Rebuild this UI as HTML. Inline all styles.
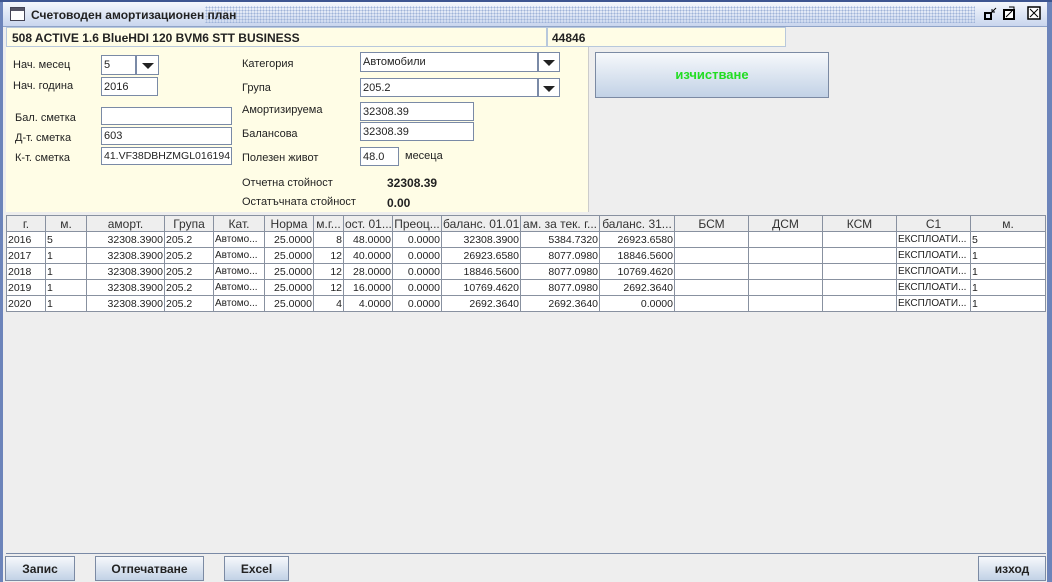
<!DOCTYPE html>
<html><head><meta charset="utf-8"><style>
*{box-sizing:border-box;margin:0;padding:0}
body{width:1052px;height:582px;overflow:hidden;background:#6c84ba;font-family:"Liberation Sans",sans-serif;font-size:11px;color:#222;position:relative}
.a{position:absolute}
.win{left:3px;top:0;width:1044px;height:582px;background:#eeeeee}
.title{left:3px;top:2px;width:1044px;height:25px;background:linear-gradient(#f4f7fc,#c9d6ee);border-bottom:1px solid #8fa3c8}
.dots{left:205px;top:6px;width:770px;height:17px;background-image:radial-gradient(#9fb3d8 0.8px,transparent 1px);background-size:3px 3px}
.tf{background:#fff;border:1px solid #7a8aa6;height:18px;padding:0 2px;font-size:11px;display:flex;align-items:center;white-space:nowrap;overflow:hidden}
.lbl{font-size:11px}
.btn{background:linear-gradient(#f6f8fb,#c2d2e6);border:1px solid #7b8aa3;text-align:center;font-weight:bold;font-size:12px;color:#222}
table{border-collapse:collapse;table-layout:fixed;position:absolute;left:6px;top:215px;width:1039px}
td,th{border:1px solid #8891a0;height:16px;font-size:10.5px;white-space:nowrap;overflow:hidden;padding:0 1px;font-weight:normal}
th{background:#eeeeee;color:#333;font-size:12px;height:16px}
td{background:#fff}
.r{text-align:right}
</style></head><body>
<div class="a win"></div>
<div class="a" style="left:0;top:0;width:1052px;height:2px;background:#3d5590"></div>
<div class="a title"></div>
<div class="a dots"></div>
<div class="a" style="left:10px;top:7px;width:15px;height:14px;border:1px solid #445;background:#fff"><div style="height:3px;background:#556"></div></div>
<div class="a" style="left:31px;top:8px;font-size:12px;font-weight:bold;color:#222">Счетоводен амортизационен план</div>
<svg class="a" style="left:982px;top:5px" width="64" height="18"><rect x="3" y="8" width="6" height="6" fill="none" stroke="#000" stroke-width="2"/><path d="M14 3 L10 7 M10 4 V7 H13" stroke="#000" fill="none"/><rect x="22" y="5" width="10" height="9" fill="#fff" stroke="#000" stroke-width="2"/><path d="M24 12 L30 6 M27 2 H32 V7" stroke="#000" fill="none"/><rect x="46" y="2" width="12" height="12" fill="#fff" stroke="#000" stroke-width="1.5"/><path d="M48 4 L56 12 M56 4 L48 12" stroke="#000"/></svg>
<div class="a" style="left:6px;top:27px;width:541px;height:20px;background:#fffde6;border:1px solid #b8c8dc;padding:3px 5px;font-weight:bold;font-size:12px">508 ACTIVE 1.6 BlueHDI 120 BVM6 STT BUSINESS</div>
<div class="a" style="left:547px;top:27px;width:239px;height:20px;background:#fffde6;border:1px solid #b8c8dc;padding:3px 4px;font-weight:bold;font-size:12px">44846</div>
<div class="a" style="left:6px;top:47px;width:583px;height:165px;background:#fffde6;border-right:1px solid #ccc"></div>
<div class="a lbl" style="left:13px;top:59px">Нач. месец</div>
<div class="a tf" style="left:101px;top:55px;width:35px;height:20px">5</div>
<div class="a" style="left:136px;top:55px;width:23px;height:20px;background:#fff;border:1px solid #7a8aa6"><div style="margin:7px auto 0;width:0;border-left:6px solid transparent;border-right:6px solid transparent;border-top:6px solid #222"></div></div>
<div class="a lbl" style="left:13px;top:80px">Нач. година</div>
<div class="a tf" style="left:101px;top:77px;width:57px;height:19px">2016</div>
<div class="a lbl" style="left:15px;top:112px">Бал. сметка</div>
<div class="a tf" style="left:101px;top:107px;width:131px">&nbsp;</div>
<div class="a lbl" style="left:15px;top:132px">Д-т. сметка</div>
<div class="a tf" style="left:101px;top:127px;width:131px">603</div>
<div class="a lbl" style="left:15px;top:152px">К-т. сметка</div>
<div class="a tf" style="left:101px;top:147px;width:131px;font-size:10.5px">41.VF38DBHZMGL016194</div>
<div class="a lbl" style="left:242px;top:58px">Категория</div>
<div class="a tf" style="left:360px;top:52px;width:178px;height:20px">Автомобили</div>
<div class="a" style="left:538px;top:52px;width:22px;height:20px;background:#fff;border:1px solid #7a8aa6"><div style="margin:7px auto 0;width:0;border-left:6px solid transparent;border-right:6px solid transparent;border-top:6px solid #222"></div></div>
<div class="a lbl" style="left:242px;top:82px">Група</div>
<div class="a tf" style="left:360px;top:78px;width:178px;height:19px">205.2</div>
<div class="a" style="left:538px;top:78px;width:22px;height:19px;background:#fff;border:1px solid #7a8aa6"><div style="margin:7px auto 0;width:0;border-left:6px solid transparent;border-right:6px solid transparent;border-top:6px solid #222"></div></div>
<div class="a lbl" style="left:242px;top:104px">Амортизируема</div>
<div class="a tf" style="left:360px;top:102px;width:114px;height:19px">32308.39</div>
<div class="a lbl" style="left:242px;top:128px">Балансова</div>
<div class="a tf" style="left:360px;top:122px;width:114px;height:19px">32308.39</div>
<div class="a lbl" style="left:242px;top:152px">Полезен живот</div>
<div class="a tf" style="left:360px;top:147px;width:39px;height:19px">48.0</div>
<div class="a lbl" style="left:405px;top:150px">месеца</div>
<div class="a lbl" style="left:242px;top:177px">Отчетна стойност</div>
<div class="a" style="left:387px;top:176px;font-weight:bold;font-size:12px">32308.39</div>
<div class="a lbl" style="left:242px;top:196px">Остатъчната стойност</div>
<div class="a" style="left:387px;top:196px;font-weight:bold;font-size:12px">0.00</div>
<div class="a btn" style="left:595px;top:52px;width:234px;height:46px;line-height:44px;color:#22dd22;font-size:13px">изчистване</div>
<table>
<colgroup><col style="width:39px"><col style="width:41px"><col style="width:78px"><col style="width:49px"><col style="width:51px"><col style="width:49px"><col style="width:30px"><col style="width:49px"><col style="width:49px"><col style="width:79px"><col style="width:79px"><col style="width:75px"><col style="width:74px"><col style="width:74px"><col style="width:74px"><col style="width:74px"><col style="width:75px"></colgroup>
<tr><th>г.</th><th>м.</th><th>аморт.</th><th>Група</th><th>Кат.</th><th>Норма</th><th>м.г...</th><th>ост. 01...</th><th>Преоц...</th><th>баланс. 01.01</th><th>ам. за тек. г...</th><th>баланс. 31...</th><th>БСМ</th><th>ДСМ</th><th>КСМ</th><th>С1</th><th>м.</th></tr>
<tr><td>2016</td><td>5</td><td class="r">32308.3900</td><td>205.2</td><td style="font-size:10px">Автомо...</td><td class="r">25.0000</td><td class="r">8</td><td class="r">48.0000</td><td class="r">0.0000</td><td class="r">32308.3900</td><td class="r">5384.7320</td><td class="r">26923.6580</td><td></td><td></td><td></td><td style="font-size:10px">ЕКСПЛОАТИ...</td><td>5</td></tr>
<tr><td>2017</td><td>1</td><td class="r">32308.3900</td><td>205.2</td><td style="font-size:10px">Автомо...</td><td class="r">25.0000</td><td class="r">12</td><td class="r">40.0000</td><td class="r">0.0000</td><td class="r">26923.6580</td><td class="r">8077.0980</td><td class="r">18846.5600</td><td></td><td></td><td></td><td style="font-size:10px">ЕКСПЛОАТИ...</td><td>1</td></tr>
<tr><td>2018</td><td>1</td><td class="r">32308.3900</td><td>205.2</td><td style="font-size:10px">Автомо...</td><td class="r">25.0000</td><td class="r">12</td><td class="r">28.0000</td><td class="r">0.0000</td><td class="r">18846.5600</td><td class="r">8077.0980</td><td class="r">10769.4620</td><td></td><td></td><td></td><td style="font-size:10px">ЕКСПЛОАТИ...</td><td>1</td></tr>
<tr><td>2019</td><td>1</td><td class="r">32308.3900</td><td>205.2</td><td style="font-size:10px">Автомо...</td><td class="r">25.0000</td><td class="r">12</td><td class="r">16.0000</td><td class="r">0.0000</td><td class="r">10769.4620</td><td class="r">8077.0980</td><td class="r">2692.3640</td><td></td><td></td><td></td><td style="font-size:10px">ЕКСПЛОАТИ...</td><td>1</td></tr>
<tr><td>2020</td><td>1</td><td class="r">32308.3900</td><td>205.2</td><td style="font-size:10px">Автомо...</td><td class="r">25.0000</td><td class="r">4</td><td class="r">4.0000</td><td class="r">0.0000</td><td class="r">2692.3640</td><td class="r">2692.3640</td><td class="r">0.0000</td><td></td><td></td><td></td><td style="font-size:10px">ЕКСПЛОАТИ...</td><td>1</td></tr>
</table>
<div class="a" style="left:6px;top:553px;width:1040px;height:1px;background:#7a8aa6"></div>
<div class="a btn" style="left:5px;top:556px;width:70px;height:25px;line-height:24px">Запис</div>
<div class="a btn" style="left:95px;top:556px;width:109px;height:25px;line-height:24px">Отпечатване</div>
<div class="a btn" style="left:224px;top:556px;width:65px;height:25px;line-height:24px">Excel</div>
<div class="a btn" style="left:978px;top:556px;width:68px;height:25px;line-height:24px">изход</div>
</body></html>
